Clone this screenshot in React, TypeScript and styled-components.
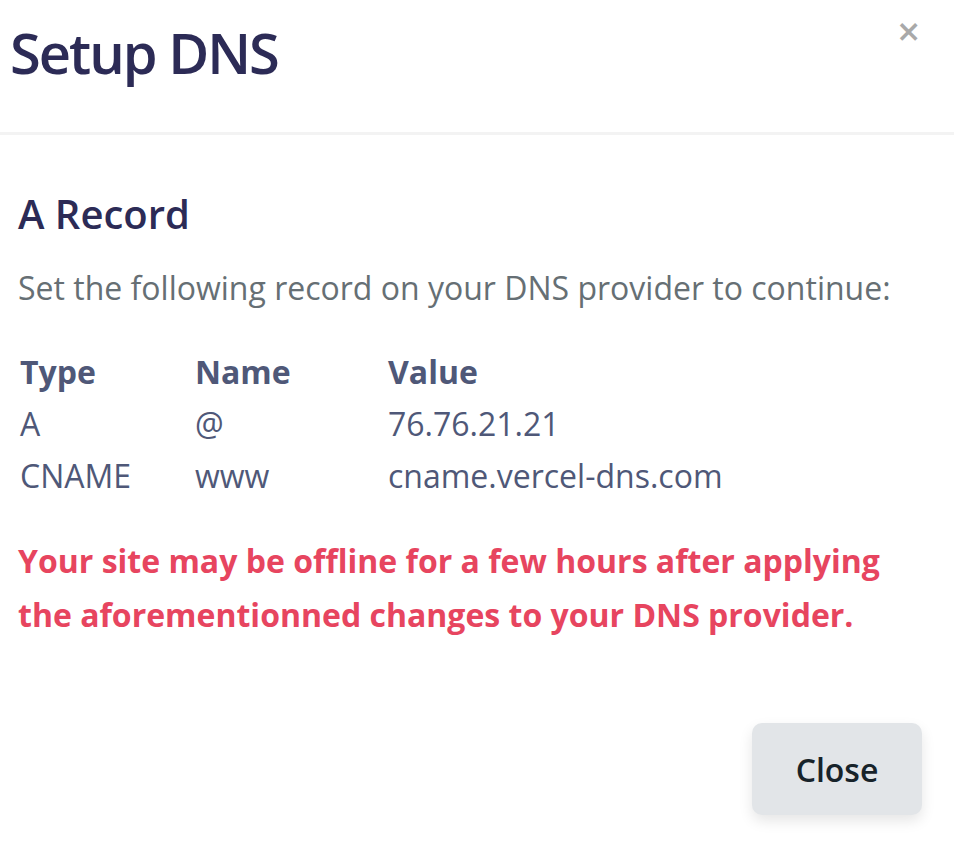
import React from 'react';
import styled, { createGlobalStyle } from 'styled-components';

const GlobalStyle = createGlobalStyle`
  html, body {
    margin: 0;
    padding: 0;
    background: #ffffff;
    font-family: 'Open Sans', 'Noto Sans', sans-serif;
  }
`;

const Modal = styled.div`
  width: 954px;
  min-height: 854px;
  background: #ffffff;
  display: flex;
  flex-direction: column;
`;

const Header = styled.header`
  display: flex;
  justify-content: space-between;
  align-items: flex-start;
  padding: 14px 34px 0 10px;
  height: 118px;
  border-bottom: 3px solid #f3f3f3;
  box-sizing: border-box;
  height: 135px;
`;

const Title = styled.h1`
  margin: 0;
  font-size: 56px;
  line-height: 76px;
  font-weight: 600;
  color: #2c2b56;
  letter-spacing: -2px;
`;

const CloseIcon = styled.button`
  border: none;
  background: none;
  padding: 0;
  margin-top: 0;
  font-family: 'Open Sans', sans-serif;
  font-size: 40px;
  line-height: 34px;
  font-weight: 600;
  color: #a9a9a9;
  cursor: pointer;
`;

const Body = styled.section`
  padding: 52px 18px 0;
  display: flex;
  flex-direction: column;
`;

const SectionTitle = styled.h2`
  margin: 0;
  font-size: 40px;
  line-height: 54px;
  font-weight: 600;
  color: #2c2b56;
`;

const Lead = styled.p`
  margin: 25px 0 0;
  font-size: 32px;
  line-height: 44px;
  color: #666f74;
`;

const RecordTable = styled.div`
  margin-top: 40px;
  display: grid;
  grid-template-columns: 175px 193px 1fr;
  row-gap: 8px;
  padding-left: 2px;
`;

const Cell = styled.div<{ $head?: boolean }>`
  font-size: 32px;
  line-height: 44px;
  font-weight: ${p => (p.$head ? 700 : 400)};
  color: #4f5878;
`;

const Warning = styled.p`
  margin: 36px 0 0;
  font-size: 32px;
  line-height: 54px;
  font-weight: 700;
  color: #e7455f;
`;

const Footer = styled.footer`
  display: flex;
  justify-content: flex-end;
  padding: 81px 32px 0;
`;

const Button = styled.button`
  width: 170px;
  height: 92px;
  border: none;
  border-radius: 10px;
  background: #e2e5e8;
  box-shadow: 0 6px 14px rgba(0, 0, 0, 0.1);
  font-family: 'Open Sans', sans-serif;
  font-size: 32px;
  font-weight: 600;
  color: #17232a;
  cursor: pointer;
`;

const records = [
  { type: 'A', name: '@', value: '76.76.21.21' },
  { type: 'CNAME', name: 'www', value: 'cname.vercel-dns.com' },
];

export default function App() {
  return (
    <>
      <GlobalStyle />
      <Modal>
        <Header>
          <Title>Setup DNS</Title>
          <CloseIcon aria-label="Close">×</CloseIcon>
        </Header>
        <Body>
          <SectionTitle>A Record</SectionTitle>
          <Lead>Set the following record on your DNS provider to continue:</Lead>
          <RecordTable>
            <Cell $head>Type</Cell>
            <Cell $head>Name</Cell>
            <Cell $head>Value</Cell>
            {records.map(r => (
              <React.Fragment key={r.type}>
                <Cell>{r.type}</Cell>
                <Cell>{r.name}</Cell>
                <Cell>{r.value}</Cell>
              </React.Fragment>
            ))}
          </RecordTable>
          <Warning>
            Your site may be offline for a few hours after applying the aforementionned changes to your DNS
            provider.
          </Warning>
        </Body>
        <Footer>
          <Button>Close</Button>
        </Footer>
      </Modal>
    </>
  );
}
